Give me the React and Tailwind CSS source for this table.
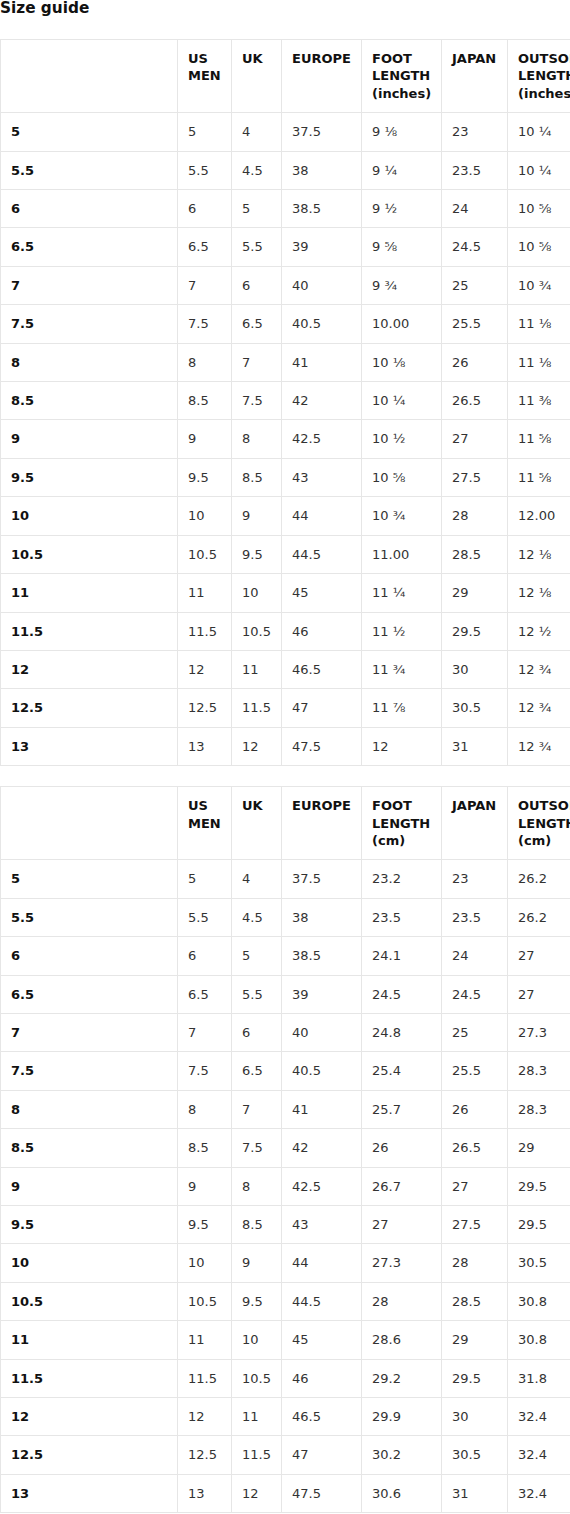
import React from 'react'

const SIZES = ['5', '5.5', '6', '6.5', '7', '7.5', '8', '8.5', '9', '9.5', '10', '10.5', '11', '11.5', '12', '12.5', '13']

const INCHES = [
  ['5', '4', '37.5', '9 ⅛', '23', '10 ¼'],
  ['5.5', '4.5', '38', '9 ¼', '23.5', '10 ¼'],
  ['6', '5', '38.5', '9 ½', '24', '10 ⅝'],
  ['6.5', '5.5', '39', '9 ⅝', '24.5', '10 ⅝'],
  ['7', '6', '40', '9 ¾', '25', '10 ¾'],
  ['7.5', '6.5', '40.5', '10.00', '25.5', '11 ⅛'],
  ['8', '7', '41', '10 ⅛', '26', '11 ⅛'],
  ['8.5', '7.5', '42', '10 ¼', '26.5', '11 ⅜'],
  ['9', '8', '42.5', '10 ½', '27', '11 ⅝'],
  ['9.5', '8.5', '43', '10 ⅝', '27.5', '11 ⅝'],
  ['10', '9', '44', '10 ¾', '28', '12.00'],
  ['10.5', '9.5', '44.5', '11.00', '28.5', '12 ⅛'],
  ['11', '10', '45', '11 ¼', '29', '12 ⅛'],
  ['11.5', '10.5', '46', '11 ½', '29.5', '12 ½'],
  ['12', '11', '46.5', '11 ¾', '30', '12 ¾'],
  ['12.5', '11.5', '47', '11 ⅞', '30.5', '12 ¾'],
  ['13', '12', '47.5', '12', '31', '12 ¾'],
]

const CM = [
  ['5', '4', '37.5', '23.2', '23', '26.2'],
  ['5.5', '4.5', '38', '23.5', '23.5', '26.2'],
  ['6', '5', '38.5', '24.1', '24', '27'],
  ['6.5', '5.5', '39', '24.5', '24.5', '27'],
  ['7', '6', '40', '24.8', '25', '27.3'],
  ['7.5', '6.5', '40.5', '25.4', '25.5', '28.3'],
  ['8', '7', '41', '25.7', '26', '28.3'],
  ['8.5', '7.5', '42', '26', '26.5', '29'],
  ['9', '8', '42.5', '26.7', '27', '29.5'],
  ['9.5', '8.5', '43', '27', '27.5', '29.5'],
  ['10', '9', '44', '27.3', '28', '30.5'],
  ['10.5', '9.5', '44.5', '28', '28.5', '30.8'],
  ['11', '10', '45', '28.6', '29', '30.8'],
  ['11.5', '10.5', '46', '29.2', '29.5', '31.8'],
  ['12', '11', '46.5', '29.9', '30', '32.4'],
  ['12.5', '11.5', '47', '30.2', '30.5', '32.4'],
  ['13', '12', '47.5', '30.6', '31', '32.4'],
]

function SizeTable({ unit, rows }) {
  const heads = [
    ['US', 'MEN'],
    ['UK'],
    ['EUROPE'],
    ['FOOT', 'LENGTH', `(${unit})`],
    ['JAPAN'],
    ['OUTSOLE', 'LENGTH', `(${unit})`],
  ]
  return (
    <table className="table-fixed border-collapse w-[660px] text-[13px] leading-[17.4px]">
      <colgroup>
        <col className="w-[177px]" />
        <col className="w-[54px]" />
        <col className="w-[50px]" />
        <col className="w-[80px]" />
        <col className="w-[80px]" />
        <col className="w-[66px]" />
        <col className="w-[153px]" />
      </colgroup>
      <thead>
        <tr>
          <th className="border border-[#e6e6e6] p-[10px]" />
          {heads.map((h, i) => (
            <th key={i} className="border border-[#e6e6e6] p-[10px] text-left align-top font-bold text-[#111]">
              {h.map((l, j) => <div key={j} className="whitespace-nowrap">{l}</div>)}
            </th>
          ))}
        </tr>
      </thead>
      <tbody>
        {rows.map((r, i) => (
          <tr key={i}>
            <td className="border border-[#e6e6e6] p-[10px] font-bold text-[#111]">{SIZES[i]}</td>
            {r.map((v, j) => (
              <td key={j} className="border border-[#e6e6e6] p-[10px] text-[#333] whitespace-nowrap">{v}</td>
            ))}
          </tr>
        ))}
      </tbody>
    </table>
  )
}

export default function App() {
  return (
    <div className="w-[570px] overflow-hidden bg-white font-['DejaVu_Sans',sans-serif]">
      <h2 className="text-[15.3px] leading-[17px] font-bold text-[#111] mb-[22px]">Size guide</h2>
      <SizeTable unit="inches" rows={INCHES} />
      <div className="h-[20px]" />
      <SizeTable unit="cm" rows={CM} />
    </div>
  )
}
